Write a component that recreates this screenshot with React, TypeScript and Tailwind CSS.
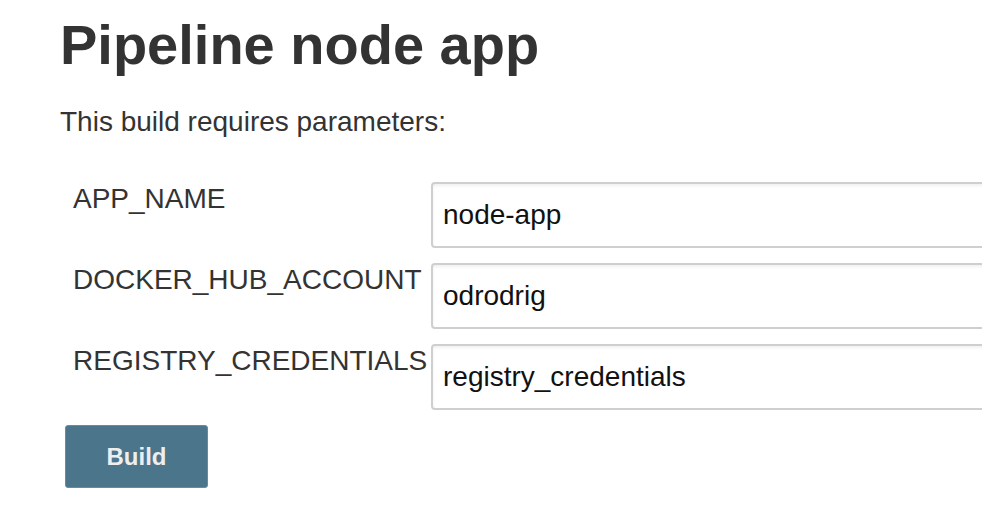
const PARAMS = [
  { name: 'APP_NAME', value: 'node-app' },
  { name: 'DOCKER_HUB_ACCOUNT', value: 'odrodrig' },
  { name: 'REGISTRY_CREDENTIALS', value: 'registry_credentials' },
];

export default function App() {
  return (
    <div className="w-[982px] h-[532px] overflow-hidden bg-white text-[#333] font-['Liberation_Sans',Arial,sans-serif]">
      <div className="pl-[60px] pt-[17px]">
        <h1 className="text-[56px] leading-[56px] font-bold">Pipeline node app</h1>
        <p className="mt-[35px] text-[28px] leading-[28px]">This build requires parameters:</p>

        <form className="mt-[46px] pl-[13px]" onSubmit={(e) => e.preventDefault()}>
          <div className="flex flex-col gap-[15px]">
            {PARAMS.map((p) => (
              <div key={p.name} className="grid grid-cols-[358px_1fr]">
                <div className="pt-[3px] text-[28px] leading-[28px] whitespace-nowrap">{p.name}</div>
                <input
                  type="text"
                  defaultValue={p.value}
                  className="w-[600px] h-[66px] px-[10px] text-[28px] text-[#111] border-2 border-[#cfcfcf] rounded-[4px] shadow-[inset_0_2px_3px_rgba(0,0,0,0.06)] outline-none"
                />
              </div>
            ))}
          </div>
          <button
            type="submit"
            className="mt-[15px] -ml-[8px] w-[143px] h-[63px] bg-[#4b758b] border border-[#5f8ea6] rounded-[3px] text-[#eee] text-[24px] font-bold"
          >
            Build
          </button>
        </form>
      </div>
    </div>
  );
}
